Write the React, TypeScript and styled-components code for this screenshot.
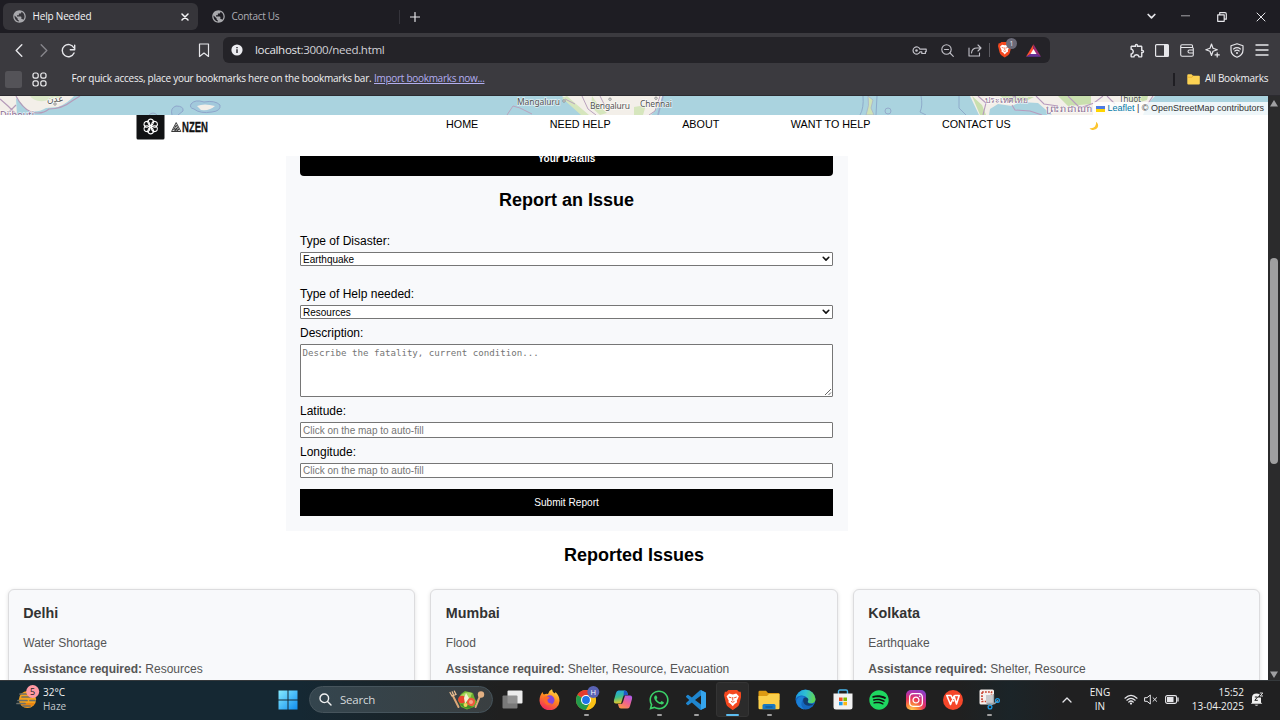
import React from 'react';
import styled, { createGlobalStyle, css } from 'styled-components';
import { MdPublic, MdOutlineExtension } from 'react-icons/md';
import { FaSpotify, FaWhatsapp, FaInstagram } from 'react-icons/fa';

const ui = `"Open Sans", "Noto Sans", sans-serif`;
const page = `"Liberation Sans", Arial, sans-serif`;

const Global = createGlobalStyle`
  * { box-sizing: border-box; }
  body { margin: 0; background: #fff; overflow: hidden; }
  svg { display: block; flex: none; }
`;

const Screen = styled.div`
  width: 1280px;
  height: 720px;
  display: flex;
  flex-direction: column;
  overflow: hidden;
`;

/* ---------- browser chrome ---------- */
const TabStrip = styled.div`
  height: 33px;
  display: flex;
  align-items: center;
  padding: 0 0 0 3px;
  background: #1e1d23;
`;
const Tab = styled.div<{ $active?: boolean }>`
  width: ${p => (p.$active ? 195 : 192)}px;
  height: 27px;
  margin-right: ${p => (p.$active ? 4 : 5)}px;
  padding: 0 9px;
  display: flex;
  align-items: center;
  border-radius: 6px;
  background: ${p => (p.$active ? '#36353a' : 'transparent')};
  color: ${p => (p.$active ? '#f4f4f6' : '#aeadb4')};
`;
const Label = styled.span<{ $size?: number; $ls?: number }>`
  font-family: ${ui};
  font-size: ${p => p.$size ?? 10}px;
  letter-spacing: ${p => p.$ls ?? 0}px;
  line-height: 13.5px;
  white-space: nowrap;
`;
const TabTitle = styled(Label)`
  flex: 1;
  margin-left: 5.5px;
`;
const StripDivider = styled.div`
  width: 1px;
  height: 14px;
  background: #35343b;
  margin-right: 2px;
`;
const Spacer = styled.div`
  flex: 1;
`;
const Slot = styled.div<{ $w: number; $color?: string }>`
  width: ${p => p.$w}px;
  flex: none;
  display: flex;
  align-items: center;
  justify-content: center;
  position: relative;
  color: ${p => p.$color ?? '#e6e6ea'};
`;
const Toolbar = styled.div`
  height: 34px;
  display: flex;
  align-items: center;
  padding-left: 6px;
  background: #3b3a3f;
`;
const BookmarkSlot = styled(Slot)`
  margin-left: 110px;
`;
const Address = styled.div`
  width: 827px;
  height: 26px;
  margin: 0 74.5px 0 7px;
  display: flex;
  align-items: center;
  padding: 0 3px;
  border-radius: 6px;
  background: #242328;
  color: #e3e3e7;
`;
const Url = styled(Label)`
  margin-left: 7px;
  line-height: 18px;
`;
const Dim = styled.span`
  color: #d0cfd5;
`;
const AddressDivider = styled.div`
  width: 1px;
  height: 14px;
  background: #5c5b61;
`;
const ShieldBadge = styled.div`
  position: absolute;
  left: 16px;
  top: -4px;
  width: 11px;
  height: 11px;
  border-radius: 50%;
  background: #6b6a78;
  color: #e8e8f2;
  font: 7px/11px ${ui};
  text-align: center;
`;
const Bookmarks = styled.div`
  height: 29px;
  padding: 0 12px 4px 5px;
  display: flex;
  align-items: center;
  background: #3b3a3f;
  color: #f1f1f3;
  border-bottom: 1px solid #2c2b30;
`;
const GreySquare = styled.div`
  width: 17px;
  height: 17px;
  border-radius: 2.5px;
  background: #545358;
  margin-right: 10px;
`;
const Hint = styled(Label)`
  margin-left: 24.5px;
  width: 302.5px;
`;
const ImportLink = styled(Label)`
  color: #b3aef0;
  text-decoration: underline;
`;
const BarDivider = styled.div`
  width: 2px;
  height: 13px;
  background: #1f1e23;
  margin-right: 12px;
`;
const AllBookmarks = styled(Label)`
  margin-left: 5px;
  width: 63px;
`;

/* ---------- web page ---------- */
const Viewport = styled.div`
  height: 584px;
  display: flex;
  background: #fff;
`;
const Page = styled.main`
  width: 1268px;
  height: 584px;
  overflow: hidden;
  font-family: ${page};
  color: #000;
`;
const MapStrip = styled.div`
  position: relative;
  height: 19px;
  overflow: hidden;
`;
const Attribution = styled.div`
  position: absolute;
  right: 0;
  bottom: 0;
  height: 13px;
  padding: 0 4px 0 3px;
  display: flex;
  align-items: center;
  gap: 2.5px;
  background: rgba(255, 255, 255, 0.8);
  color: #333;
  font-size: 9px;
  line-height: 13px;
  white-space: nowrap;
`;
const LeafletLink = styled.span`
  color: #0078a8;
`;
const Nav = styled.nav`
  height: 41px;
  padding-left: 136px;
  display: flex;
  align-items: flex-start;
  background: #fff;
`;
const NavLinks = styled.div`
  margin: 3px 0 0 236px;
  display: flex;
  gap: 71.5px;
  font-size: 10.75px;
  line-height: 13px;
  white-space: nowrap;
`;
const Moon = styled.div`
  margin: 6px 0 0 77px;
`;
const Body = styled.div`
  height: 524px;
  overflow: hidden;
`;
const Form = styled.form`
  width: 562px;
  height: 375px;
  margin-left: 285.5px;
  padding: 0 14.5px;
  display: flex;
  flex-direction: column;
  background: #f8f9fb;
`;
const DetailsButton = styled.div`
  flex: none;
  height: 35px;
  margin: -15px 0 13px;
  border-radius: 4px;
  background: #000;
  color: #fff;
  font-size: 10px;
  font-weight: bold;
  line-height: 35px;
  text-align: center;
`;
const Heading = styled.h2`
  margin: 0;
  font-size: 18px;
  line-height: 23px;
  text-align: center;
`;
const FieldLabel = styled.label<{ $top: number }>`
  margin-top: ${p => p.$top}px;
  font-size: 12px;
  line-height: 14px;
`;
const field = css`
  width: 533px;
  display: block;
  flex: none;
  margin: 4px 0 0;
  border: 1px solid #767676;
  border-radius: 1px;
  background: #fff;
  color: #000;
  font: 10px/12px ${page};
  outline: none;
`;
const SelectWrap = styled.div`
  position: relative;
`;
const Select = styled.select`
  ${field}
  height: 14px;
  padding: 1px 2px 0;
  line-height: 11px;
  appearance: none;
`;
const Arrow = styled.div`
  position: absolute;
  right: 3px;
  bottom: 4px;
`;
const Area = styled.textarea`
  ${field}
  height: 53px;
  padding: 2px 1.5px;
  font: 9.13px/12px "DejaVu Sans Mono", monospace;
  resize: none;
  &::placeholder { color: #757575; }
`;
const AreaWrap = styled.div`
  position: relative;
`;
const Grip = styled.div`
  position: absolute;
  right: 1px;
  bottom: 1px;
`;
const Input = styled.input<{ $h: number }>`
  ${field}
  height: ${p => p.$h}px;
  padding: 0 2px;
  &::placeholder { color: #757575; }
`;
const Submit = styled.button`
  width: 533px;
  height: 27px;
  margin-top: 11.5px;
  padding: 1px 0 0;
  flex: none;
  border: 0;
  background: #000;
  color: #fff;
  font: 10.15px/26px ${page};
`;
const IssuesHeading = styled(Heading)`
  margin: 13px 0 22px;
`;
const Cards = styled.div`
  display: grid;
  grid-template-columns: repeat(3, 407.5px);
  column-gap: 15px;
  padding-left: 7.5px;
`;
const Card = styled.article`
  height: 130px;
  padding: 0 14.8px;
  border: 1px solid #dcdcde;
  border-radius: 6px;
  background: #f8f9fb;
  box-shadow: 0 1px 4px rgba(0, 0, 0, 0.12);
  color: #555;
  font-size: 12px;
  line-height: 14px;
`;
const City = styled.h3`
  margin: 15px 0 14px;
  color: #333;
  font-size: 14.3px;
  line-height: 17px;
`;
const Line = styled.p`
  margin: 0 0 12px;
`;
const Scrollbar = styled.div`
  width: 12px;
  height: 584px;
  display: flex;
  flex-direction: column;
  align-items: center;
  background: #2b2b2c;
`;
const Thumb = styled.div`
  width: 8px;
  height: 206px;
  margin: 149.5px 0 206px;
  border-radius: 4px;
  background: #9f9fa0;
`;

/* ---------- taskbar ---------- */
const Taskbar = styled.div`
  height: 40px;
  padding-bottom: 1.5px;
  display: flex;
  align-items: center;
  background: linear-gradient(90deg, #152833 0, #152833 300px, #1b2327 420px, #202020 500px, #202020 960px, #1b2428 1010px, #202021 1060px);
  border-top: 1px solid #35393c;
  color: #f2f2f2;
`;
const Weather = styled.div`
  width: 276.5px;
  padding-left: 16px;
  display: flex;
  align-items: center;
`;
const WeatherIcon = styled.div`
  margin-top: -4px;
`;
const Stack = styled.div<{ $align?: string }>`
  display: flex;
  flex-direction: column;
  align-items: ${p => p.$align ?? 'flex-start'};
`;
const WeatherText = styled(Stack)`
  margin-left: 3px;
`;
const HazeText = styled(Label)`
  color: #c3c9cc;
`;
const Search = styled.div`
  width: 184px;
  height: 27px;
  margin: 0 1.5px 0 9.5px;
  padding: 0 7px 0 9px;
  display: flex;
  align-items: center;
  border-radius: 14px;
  border: 1px solid #46545c;
  background: linear-gradient(90deg, #34454e, #3a3f41);
`;
const SearchText = styled(Label)`
  flex: 1;
  margin-left: 8px;
  color: #d5d9db;
`;
const AppSlot = styled.div`
  width: 36.65px;
  height: 38px;
  flex: none;
  position: relative;
  display: flex;
  align-items: center;
  justify-content: center;
`;
const Tile = styled.div<{ $active?: boolean }>`
  width: 33px;
  height: 35px;
  display: flex;
  align-items: center;
  justify-content: center;
  border-radius: 3px;
  border: 1px solid ${p => (p.$active ? '#343434' : 'transparent')};
  background: ${p => (p.$active ? '#2b2b2b' : 'transparent')};
`;
const Mark = styled.div<{ $active?: boolean }>`
  position: absolute;
  bottom: 2.5px;
  width: ${p => (p.$active ? 13 : 5)}px;
  height: 2.5px;
  border-radius: 2px;
  background: ${p => (p.$active ? '#5dbdf0' : '#a0a0a0')};
`;
const Language = styled(Stack)`
  width: 40px;
`;
const Clock = styled(Stack)`
  width: 61px;
`;
const Bell = styled(Slot)`
  padding-right: 10px;
`;

const stroke = (w = 1.3) => ({ fill: 'none', stroke: 'currentColor', strokeWidth: w, strokeLinecap: 'round' as const, strokeLinejoin: 'round' as const });

const Globe = () => <MdPublic size={15} color="#a9a9ad" />;

const MapArt = () => (
  <svg width="1268" height="19" viewBox="0 0 1268 19">
    <rect width="1268" height="19" fill="#aad3df" />
    <path d="M0 0H74Q68 7 58 11L46 12Q38 17 28 15L21 7L16 2L17 19H0Z" fill="#f3efe9" />
    <path d="M30 0Q34 6 44 5L62 1V0Z" fill="#dbe8c8" />
    <path d="M16 0Q22 12 31 16Q42 19 49 13Q62 13 72 5L80 0M0 3L8 10L17 19M6 19L16 9" fill="none" stroke="#b59bb9" strokeWidth="1.2" />
    <path d="M191 8Q195 3 204 6Q215 4 220 9Q221 15 212 16Q200 18 194 13Q189 12 191 8ZM172 19Q170 12 176 10Q184 10 183 15L178 19" fill="#a2c9dc" stroke="#8fa6cb" strokeWidth="1" />
    <path d="M197 10Q204 7 215 10Q210 15 201 14Z" fill="#f3efe9" />
    <path d="M149 19Q153 15 157 19" fill="none" stroke="#98abc9" />
    <path d="M562 0H663L659 10L651 19H585L573 9Z" fill="#f3efe9" />
    <path d="M567 0L576 8L589 19H581L562 2ZM592 0L599 10L607 17L600 19L591 11ZM634 11L646 9L643 19H634Z" fill="#d6e6bd" />
    <path d="M507 19L513 10L520 12L532 18M565 3L575 8M582 0L588 13L596 19M600 0L605 10L622 12M660 0L655 15L649 19" fill="none" stroke="#b9a2bd" strokeWidth="1" />
    <path d="M663 0L658 19" stroke="#9eaed0" strokeWidth="1.6" />
    <path d="M868 0L873 4L871 12L874 19H866Q870 9 868 0Z" fill="#cfe2b5" stroke="#a9b4c8" strokeWidth=".8" />
    <path d="M863 0Q864 12 860 19M877 0L876 19" fill="none" stroke="#8eabca" />
    <circle cx="888" cy="15" r="3" fill="none" stroke="#94aacb" />
    <path d="M921 0Q923 10 920 16L926 19M959 0V12L966 19" fill="none" stroke="#8eabca" />
    <path d="M970 0H1155L1148 7L1143 19H1052L1038 7L1020 6L1012 10L998 8L990 13L989 19H979Z" fill="#f3efe9" />
    <path d="M972 0L982 9L986 19H980ZM1000 0L1008 6L1026 5L1034 1ZM1058 0L1068 10L1091 8V0ZM1122 0L1133 8L1147 4L1148 0Z" fill="#c9dfae" />
    <path d="M978 0L986 7L983 19M1012 9L1015 14L1030 15L1042 19M1036 0L1044 8L1058 10M1068 0L1080 12L1094 7L1103 0M1107 0L1115 8M1153 0L1147 9" fill="none" stroke="#b79bbd" strokeWidth="1.1" />
    <g fontFamily='"Noto Sans", "Open Sans", "DejaVu Sans", sans-serif' fontSize="8.5" fill="#555" stroke="#fff" strokeWidth="1.4" strokeOpacity=".65" paintOrder="stroke">
      <text x="517" y="9" textLength="43">Mangaluru</text>
      <text x="590" y="13" textLength="40">Bengaluru</text>
      <text x="640" y="11.3" textLength="32">Chennai</text>
      <text x="0" y="21.5" fontSize="9" fill="#8a6d93" textLength="34">Djibouti</text>
      <text x="47" y="6" fontSize="9">عدن</text>
      <text x="985" y="6.5" fill="#8a6d93" textLength="43">ประเทศไทย</text>
      <text x="1046" y="16" fill="#8a6d93" textLength="46" lengthAdjust="spacingAndGlyphs">ព្រះរាជាណា</text>
      <text x="1119" y="6" textLength="22">Thuột</text>
    </g>
    <g fill="#fff" stroke="#777" strokeWidth=".8">
      <circle cx="564" cy="5" r="1.2" /><circle cx="610" cy="3.2" r="1.2" /><circle cx="656" cy="2.2" r="1.2" /><circle cx="55" cy="8" r="1.2" />
    </g>
  </svg>
);

const Logo = () => (
  <svg width="74" height="25" viewBox="0 0 74 25">
    <path d="M.5 0H28.5V23A1.5 1.5 0 0 1 27 24.5H2A1.5 1.5 0 0 1 .5 23Z" fill="#111214" />
    <g fill="none" stroke="#fff" strokeWidth="1.1">
      {[0, 60, 120, 180, 240, 300].map(a => (
        <path key={a} d="M14.7 10.4Q12.200 9.800 11.600 6.900Q12.600 4.100 14.700 4.100Q16.800 4.100 17.800 6.900Q17.200 9.800 14.700 10.400" transform={`rotate(${a} 14.7 11.5)`} />
      ))}
      <circle cx="14.7" cy="11.5" r=".9" />
    </g>
    <path d="M35.6 16.5L40.2 7.6L44.8 16.5ZM37.6 15L40.2 10.2L42.7 15ZM39 16L40.2 12.8L41.5 16" fill="none" stroke="#222" strokeWidth=".9" />
    <text x="46" y="17" fontFamily={page} fontWeight="bold" fontSize="14.2" textLength="26" lengthAdjust="spacingAndGlyphs" fill="#111" stroke="#111" strokeWidth=".3">NZEN</text>
  </svg>
);

const Chevron = () => (
  <svg width="8" height="6" viewBox="0 0 8 6"><path d="M1.2 1.3L4 4.1L6.8 1.3" {...stroke(1.6)} stroke="#111" /></svg>
);

const Puzzle = () => <MdOutlineExtension size={17} />;

const Lion = ({ size }: { size: number }) => (
  <svg width={size} height={size * 1.15} viewBox="0 0 20 23">
    <path d="M5 0H15L17 2L19 2L20 6L17.5 16Q17 18 15 19.5L10 23L5 19.5Q3 18 2.5 16L0 6L1 2L3 2Z" fill="#f5481f" />
    <path d="M6 4L10 5L14 4L17 7L14.6 12.2L15 14L12.2 16L10 18.6L7.8 16L5 14L5.4 12.2L3 7Z" fill="#fff" />
    <path d="M5.5 8L8.5 9M14.5 8L11.5 9M10 8V12M8 13L10 14L12 13" stroke="#f5481f" strokeWidth="1.1" fill="none" />
  </svg>
);

const Haze = () => (
  <svg width="24" height="25" viewBox="0 0 24 25">
    <circle cx="11.5" cy="14.500" r="8.6" fill="#f5a21d" />
    <path d="M4 18A8.6 8.6 0 0 0 19 18Z" fill="#e88512" />
    <g stroke="#6d6f6a" strokeWidth="1.7" strokeLinecap="round">
      <path d="M4 9H13M6 12H17M2 15.5H11M14 15.5H19M1 18.5H9M7 21H14" />
    </g>
    <circle cx="16.7" cy="6.5" r="6.5" fill="#ff99a4" />
    <text x="16.7" y="10" textAnchor="middle" fontSize="9" fontFamily={ui} fill="#222">5</text>
  </svg>
);

const Windows = () => (
  <svg width="20" height="20" viewBox="0 0 20 20">
    <defs><linearGradient id="win" x1="0" y1="0" x2="1" y2="1"><stop stopColor="#86ebff" /><stop offset="1" stopColor="#0f8cf0" /></linearGradient></defs>
    <path d="M.5.5H9.5V9.5H.5ZM10.5.5H19.5V9.5H10.5ZM.5 10.5H9.5V19.5H.5ZM10.5 10.5H19.5V19.5H10.5Z" fill="url(#win)" />
  </svg>
);

const Salad = () => (
  <svg width="36" height="20" viewBox="0 0 36 20">
    <g strokeLinecap="round" fill="none">
      <path d="M4 6L9.5 17" stroke="#dca878" strokeWidth="2" />
      <path d="M1 2.5L3 6L7 4.5L5.4 1.2M3.2 1.8L4.5 5" stroke="#e9bd92" strokeWidth="1.3" />
      <path d="M31 6L26.5 17" stroke="#dca878" strokeWidth="2" />
    </g>
    <circle cx="32" cy="4.5" r="3.2" fill="#e3b083" />
    <path d="M9 10L12 4L16 1L20 2L24 3L26 9L28 12L25 17L18 19.500L12 17Z" fill="#6bb02f" />
    <path d="M10 8Q15 0 23 3L21 9L12 12Z" fill="#a7d65c" />
    <circle cx="13" cy="9.500" r="3.8" fill="#e8432e" /><circle cx="22" cy="12" r="4.2" fill="#ef5a3c" />
    <circle cx="22" cy="12" r="2" fill="#f7a58a" /><path d="M17 3L20 8L16 14L15 8Z" fill="#f6efd2" />
    <path d="M11 14Q17 21 24 17L19 15Z" fill="#3f8f25" /><circle cx="16.5" cy="15" r="2" fill="#f4d35a" />
  </svg>
);

const TaskView = () => (
  <svg width="21" height="19" viewBox="0 0 21 19">
    <rect x="5.5" y=".5" width="15" height="13" rx="1" fill="#ececec" />
    <rect x=".5" y="5.5" width="15" height="13" rx="1" fill="#858585" fillOpacity=".88" />
  </svg>
);

const Firefox = () => (
  <svg width="21" height="21" viewBox="0 0 21 21">
    <defs><linearGradient id="fx" x1=".8" y1="0" x2=".3" y2="1"><stop stopColor="#ffe14a" /><stop offset=".45" stopColor="#ff8a1e" /><stop offset="1" stopColor="#f0265f" /></linearGradient></defs>
    <path d="M3.6 3Q4 5 5 5.5Q7 4.5 9 5Q10 1.5 13 .3Q13 3 16 4.5L16.5 3Q20.7 7 20.5 12A10 9.5 0 0 1 .5 11.5Q.6 6 3.6 3Z" fill="url(#fx)" />
    <circle cx="10.8" cy="11" r="4.7" fill="#8246dc" />
    <path d="M5 8Q8 6 11 9Q8 9.5 8.5 12Q9.5 15 13 14.5Q11 17 7.5 15.5Q4 13 5 8Z" fill="#ff6a2b" />
  </svg>
);

const Chrome = () => (
  <svg width="28" height="29" viewBox="-2 0 28 29">
    <circle cx="12" cy="15" r="10" fill="#fbc116" />
    <path d="M12 15L3.34 10A10 10 0 0 1 20.66 10Z" fill="#e33b2e" />
    <path d="M12 15L3.34 10A10 10 0 0 0 12 25L16 18Z" fill="#229a4c" />
    <path d="M12 10H20.660A10 10 0 0 1 12 25L16.5 17Z" fill="#fbc116" />
    <circle cx="12" cy="15" r="5" fill="#fff" /><circle cx="12" cy="15" r="3.9" fill="#1d74e8" />
    <circle cx="19.3" cy="7" r="6" fill="#5a63b5" />
    <text x="19.3" y="9.700" textAnchor="middle" fontFamily={ui} fontSize="7.5" fill="#fff">H</text>
  </svg>
);

const Copilot = () => (
  <svg width="20" height="19" viewBox="0 0 20 19">
    <defs>
      <linearGradient id="cpa" x1="0" y1="0" x2=".2" y2="1"><stop stopColor="#1fa0ea" /><stop offset=".55" stopColor="#3ec08b" /><stop offset="1" stopColor="#e6c72b" /></linearGradient>
      <linearGradient id="cpb" x1=".8" y1="0" x2=".2" y2="1"><stop stopColor="#b05be8" /><stop offset=".5" stopColor="#f0638c" /><stop offset="1" stopColor="#fb9747" /></linearGradient>
    </defs>
    <path d="M5.5 .5H12Q14 .5 14.5 3L15 5H12Q10.5 5 10 7L8 13.5H3Q.3 13.5 1 10L3 3Q3.6 .5 5.5 .5Z" fill="url(#cpa)" />
    <path d="M14.5 18.5H8Q6 18.5 5.5 16L5 14H8Q9.5 14 10 12L12 5.5H17Q19.7 5.5 19 9L17 16Q16.4 18.5 14.5 18.5Z" fill="url(#cpb)" />
    <path d="M11 .5Q14 .5 14.5 3L15 5H12Q11 5 10.5 6.5Z" fill="#1d58c9" />
  </svg>
);

const VsCode = () => (
  <svg width="20" height="20" viewBox="0 0 24 24">
    <path d="M23.15 2.587L18.21 .21a1.494 1.494 0 0 0-1.705 .29l-9.46 8.63-4.12-3.128a.999 .999 0 0 0-1.276 .057L.327 7.261A1 1 0 0 0 .326 8.74L3.899 12 .326 15.26a1 1 0 0 0 .001 1.479L1.65 17.94a.999 .999 0 0 0 1.276 .057l4.12-3.128 9.46 8.63a1.492 1.492 0 0 0 1.704 .29l4.942-2.377A1.5 1.5 0 0 0 24 20.06V3.939a1.5 1.5 0 0 0-.85-1.352zm-5.146 14.861L10.826 12l7.178-5.448v10.896z" fill="#1f86cf" />
    <path d="M18 .2L23.15 2.587Q24 3 24 3.939V20.06Q24 21 23.15 21.4L18 23.8Z" fill="#35a5ee" />
  </svg>
);

const Explorer = () => (
  <svg width="22" height="20" viewBox="0 0 22 20">
    <path d="M.5 2Q.5 .8 1.7 .8H8L10 3H20.5Q21.5 3 21.5 4V10H.5Z" fill="#dd9a12" />
    <path d="M.5 6H9L11 4H21.5V18Q21.5 19.2 20.3 19.2H1.7Q.5 19.2 .5 18Z" fill="#fcd04b" />
    <path d="M4.5 19.2V15.5Q4.5 14 6 14H16Q17.5 14 17.5 15.5V19.2Z" fill="#1878c2" />
    <path d="M7.5 17H14.5" stroke="#0d5592" strokeWidth="1.2" />
  </svg>
);

const Edge = () => (
  <svg width="21" height="21" viewBox="0 0 21 21">
    <defs>
      <linearGradient id="eg" x1="0" y1=".3" x2="1" y2=".4"><stop stopColor="#1c9be0" /><stop offset=".5" stopColor="#2fc0d3" /><stop offset="1" stopColor="#63d84a" /></linearGradient>
    </defs>
    <circle cx="10.5" cy="10.5" r="10" fill="#1467be" />
    <path d="M.6 9.5A10 10 0 0 1 20.5 10Q20.5 14 16 14.3Q12.5 14.2 12.7 12.5Q14 11 12.5 9Q10 6 6 6.5Q2 7 .6 9.5Z" fill="url(#eg)" />
    <path d="M7.5 11Q7.5 8.5 10 8.2Q7 6.5 4 8Q0 11 2.5 16Q4.5 19.5 9 20.4Q4.5 16 7.5 11Z" fill="#1b7fd6" />
    <path d="M9.9 8.4Q13.5 8.8 13.3 11Q12.3 12.5 12.8 13.5Q14 15.6 18.7 14.7Q17 17 13.5 16.8Q8 16 8.1 11Q8.3 9 9.9 8.4Z" fill="#123d70" />
  </svg>
);

const Store = () => (
  <svg width="20" height="21" viewBox="0 0 20 21">
    <path d="M5.5 5V2.5Q5.5 1 7 1H13Q14.5 1 14.5 2.5V5" fill="none" stroke="#45b4ea" strokeWidth="1.4" />
    <path d="M.5 4.5H19.5V18Q19.5 20.5 17 20.5H3Q.5 20.5 .5 18Z" fill="#f2f2f2" />
    <path d="M6 8.5H9.6V12H6Z" fill="#f04e23" /><path d="M10.4 8.5H14V12H10.4Z" fill="#7fba00" />
    <path d="M6 12.8H9.6V16.3H6Z" fill="#1d9de8" /><path d="M10.4 12.8H14V16.3H10.4Z" fill="#fdb813" />
  </svg>
);

const GlyphTile = styled.div<{ $bg: string; $round?: boolean }>`
  width: 20px;
  height: 20px;
  display: flex;
  align-items: center;
  justify-content: center;
  border-radius: ${p => (p.$round ? '50%' : '5px')};
  background: ${p => p.$bg};
`;

const Spotify = () => (
  <GlyphTile $round $bg="radial-gradient(circle, #111 55%, transparent 56%)"><FaSpotify size={20} color="#1ed760" /></GlyphTile>
);
const Instagram = () => (
  <GlyphTile $bg="radial-gradient(circle at 28% 105%, #ffd65c 0, #fb8b3a 25%, #e8335d 50%, #b732a8 72%, #6a4bd8 100%)">
    <FaInstagram size={16} color="#fff" />
  </GlyphTile>
);
const Wps = () => (
  <GlyphTile $round $bg="#f5472a">
    <svg width="14" height="12" viewBox="0 0 14 12"><path d="M.8 1.5H5L7.5 7M.8 1.5L4.5 10.5L8 2L10.5 10L13.2 1.5H9" {...stroke(1.6)} stroke="#fff" /></svg>
  </GlyphTile>
);
const Snip = () => (
  <svg width="21" height="21" viewBox="0 0 21 21">
    <rect x=".5" y=".5" width="14.5" height="15" rx="1.5" fill="#f5f0ee" />
    <rect x="3" y="3" width="9.5" height="9.5" fill="none" stroke="#c94532" strokeWidth="1.7" strokeDasharray="1.800 1.200" />
    <path d="M7 6H14V15H7Z" fill="#c9c9cc" />
    <path d="M14.5 5V14L10.5 17M8 14.5H15.5L19 11.5" fill="none" stroke="#9fa5aa" strokeWidth="1.3" />
    <circle cx="11" cy="18" r="1.9" fill="none" stroke="#1f9be6" strokeWidth="1.3" />
    <circle cx="18.5" cy="11.5" r="1.9" fill="none" stroke="#1f9be6" strokeWidth="1.3" />
  </svg>
);

const apps: { name: string; icon: React.ReactNode; open?: boolean; active?: boolean }[] = [
  { name: 'taskview', icon: <TaskView /> },
  { name: 'firefox', icon: <Firefox /> },
  { name: 'chrome', icon: <Chrome />, open: true },
  { name: 'copilot', icon: <Copilot /> },
  { name: 'whatsapp', icon: <FaWhatsapp size={22} color="#3ad168" />, open: true },
  { name: 'vscode', icon: <VsCode />, open: true },
  { name: 'brave', icon: <Lion size={17.5} />, open: true, active: true },
  { name: 'explorer', icon: <Explorer />, open: true },
  { name: 'edge', icon: <Edge /> },
  { name: 'store', icon: <Store /> },
  { name: 'spotify', icon: <Spotify /> },
  { name: 'instagram', icon: <Instagram /> },
  { name: 'wps', icon: <Wps /> },
  { name: 'snip', icon: <Snip />, open: true },
];

const issues = [
  { city: 'Delhi', kind: 'Water Shortage', help: 'Resources' },
  { city: 'Mumbai', kind: 'Flood', help: 'Shelter, Resource, Evacuation' },
  { city: 'Kolkata', kind: 'Earthquake', help: 'Shelter, Resource' },
];

const BrowserTop = () => (
  <>
    <TabStrip>
      <Tab $active>
        <Globe />
        <TabTitle $ls={-0.18}>Help Needed</TabTitle>
        <svg width="8" height="8" viewBox="0 0 8 8"><path d="M1 1L7 7M7 1L1 7" {...stroke(1.5)} /></svg>
      </Tab>
      <Tab>
        <Globe />
        <TabTitle $ls={-0.28}>Contact Us</TabTitle>
      </Tab>
      <StripDivider />
      <Slot $w={26}><svg width="10" height="10" viewBox="0 0 10 10"><path d="M5 .5V9.5M.5 5H9.5" {...stroke(1.2)} /></svg></Slot>
      <Spacer />
      <Slot $w={34}><svg width="9" height="7" viewBox="0 0 9 7"><path d="M1.2 1.5L4.5 4.8L7.8 1.5" {...stroke(1.7)} /></svg></Slot>
      <Slot $w={34}><svg width="9" height="3" viewBox="0 0 9 3"><path d="M0 .8H9" stroke="#a4a4a8" strokeWidth="1" /></svg></Slot>
      <Slot $w={40}><svg width="10" height="10" viewBox="0 0 10 10"><path d="M.7 2.8H7.2V9.3H.7ZM2.7 2.5V.7H8Q9.3 .7 9.3 2V7.2H7.5" {...stroke(1.2)} /></svg></Slot>
      <Slot $w={38}><svg width="10" height="10" viewBox="0 0 10 10"><path d="M1 1L9 9M9 1L1 9" {...stroke(1)} /></svg></Slot>
    </TabStrip>
    <Toolbar>
      <Slot $w={25}><svg width="8" height="13" viewBox="0 0 8 13"><path d="M6.8 .8L1.2 6.5L6.8 12.2" {...stroke(1.4)} /></svg></Slot>
      <Slot $w={25} $color="#86858b"><svg width="8" height="13" viewBox="0 0 8 13"><path d="M1.2 .8L6.8 6.5L1.2 12.2" {...stroke(1.4)} /></svg></Slot>
      <Slot $w={25}><svg width="15" height="15" viewBox="0 0 15 15"><path d="M12.8 4.8A6.1 6.1 0 1 0 13 10M13.7 2.2V6.8H9.3" {...stroke(1.4)} /></svg></Slot>
      <BookmarkSlot $w={25}><svg width="12" height="15" viewBox="0 0 12 15"><path d="M1.5 1H10.5V13.5L6 10L1.5 13.5Z" {...stroke(1.2)} /></svg></BookmarkSlot>
      <Address>
        <Slot $w={22}>
          <svg width="12" height="12" viewBox="0 0 12 12"><circle cx="6" cy="6" r="5.6" fill="#ececf0" /><path d="M6 5.3V9M6 3V4.3" stroke="#242328" strokeWidth="1.4" /></svg>
        </Slot>
        <Url $size={11.6} $ls={-0.34}>localhost<Dim>:3000/need.html</Dim></Url>
        <Spacer />
        <Slot $w={28} $color="#c2c1c8"><svg width="15" height="9" viewBox="0 0 15 9"><path d="M8 3.2A3.6 3.6 0 1 0 8 5.8H9.8V7.5H13.4V5.6H14.2V3.2Z" {...stroke(1.2)} /><circle cx="4.5" cy="4.5" r="1.3" fill="currentColor" /></svg></Slot>
        <Slot $w={28} $color="#c2c1c8"><svg width="13" height="13" viewBox="0 0 13 13"><circle cx="5.5" cy="5.5" r="4.7" {...stroke(1.1)} /><path d="M9 9L12.3 12.3M3.5 5.5H7.5" {...stroke(1.1)} /></svg></Slot>
        <Slot $w={28} $color="#c2c1c8"><svg width="14" height="13" viewBox="0 0 14 13"><path d="M1 4V12H11.5V9M3.5 9Q4 4 9 4H13M10 1L13 4L10 7" {...stroke(1.1)} /></svg></Slot>
        <AddressDivider />
        <Slot $w={30}><Lion size={13.5} /><ShieldBadge>1</ShieldBadge></Slot>
        <Slot $w={27}>
          <svg width="15" height="13" viewBox="0 0 15 13"><path d="M7.5 .3L0 12.7L7.5 8.5Z" fill="#ff5030" /><path d="M7.5 .3L15 12.7L7.5 8.5Z" fill="#9c2a76" /><path d="M0 12.7H15L7.5 8Z" fill="#67329a" /><path d="M7.5 5L4.5 10H10.5Z" fill="#fff" /></svg>
        </Slot>
      </Address>
      <Slot $w={25}><Puzzle /></Slot>
      <Slot $w={25}><svg width="14" height="13" viewBox="0 0 14 13"><rect x=".6" y=".6" width="12.8" height="11.8" rx="1" {...stroke(1.2)} /><path d="M9 .6H13.4V12.4H9Z" fill="currentColor" /></svg></Slot>
      <Slot $w={25}><svg width="14" height="13" viewBox="0 0 14 13"><path d="M12.5 3.5V1.8Q12.5 .8 11.5 .8H2Q.7 .8 .7 2.2T2 3.5H12.3Q13.3 3.5 13.3 4.5V11Q13.3 12.2 12 12.2H2.2Q.7 12.2 .7 10.8V2.2M13.3 6H9.5Q8 6 8 7.5T9.5 9H13.3" {...stroke(1.1)} /></svg></Slot>
      <Slot $w={25}><svg width="15" height="15" viewBox="0 0 15 15"><path d="M6.5 1L8 5.3L12.3 6.7L8 8.2L6.5 12.5L5 8.2L.8 6.7L5 5.3Z" {...stroke(1.2)} /><path d="M12.2 9.8V14M10.1 11.9H14.3" {...stroke(1.2)} /></svg></Slot>
      <Slot $w={25}><svg width="14" height="15" viewBox="0 0 14 15"><path d="M7 .8L13 2.8V7Q13 12 7 14.2Q1 12 1 7V2.8Z" {...stroke(1.2)} /><path d="M3.6 6Q7 3.4 10.4 6M4.8 8Q7 6.4 9.2 8" {...stroke(1.2)} /><circle cx="7" cy="10" r="1" fill="currentColor" /></svg></Slot>
      <Slot $w={25}><svg width="14" height="12" viewBox="0 0 14 12"><path d="M.5 1H13.5M.5 6H13.5M.5 11H13.5" stroke="currentColor" strokeWidth="1.3" /></svg></Slot>
    </Toolbar>
    <Bookmarks>
      <GreySquare />
      <svg width="15" height="15" viewBox="0 0 15 15">
        {[1, 8.8].flatMap(x => [1, 8.8].map(y => <rect key={`${x}-${y}`} x={x} y={y} width="5.2" height="5.2" rx="1.9" {...stroke(1.2)} />))}
      </svg>
      <Hint $ls={-0.26}>For quick access, place your bookmarks here on the bookmarks bar.</Hint>
      <ImportLink $ls={-0.29}>Import bookmarks now...</ImportLink>
      <Spacer />
      <BarDivider />
      <svg width="13" height="11" viewBox="0 0 13 11"><path d="M.3 1.3Q.3 .3 1.3 .3H4.5L6 1.8H12Q12.8 1.8 12.8 2.6V9.6Q12.8 10.6 11.8 10.6H1.3Q.3 10.6 .3 9.6Z" fill="#fcd253" /><path d="M.3 3.2H5L6 1.8" stroke="#e5a92c" strokeWidth=".8" fill="none" /></svg>
      <AllBookmarks $ls={-0.27}>All Bookmarks</AllBookmarks>
    </Bookmarks>
  </>
);

const SelectField = ({ value }: { value: string }) => (
  <SelectWrap>
    <Select defaultValue={value}><option>{value}</option></Select>
    <Arrow><Chevron /></Arrow>
  </SelectWrap>
);

const WebPage = () => (
  <Viewport>
    <Page>
      <MapStrip>
        <MapArt />
        <Attribution>
          <svg width="9" height="6" viewBox="0 0 9 6"><path d="M0 0H9V3H0Z" fill="#4c7be1" /><path d="M0 3H9V6H0Z" fill="#ffd500" /></svg>
          <LeafletLink>Leaflet</LeafletLink>
          <span>|</span>
          <span>© OpenStreetMap contributors</span>
        </Attribution>
      </MapStrip>
      <Nav>
        <Logo />
        <NavLinks>
          {['HOME', 'NEED HELP', 'ABOUT', 'WANT TO HELP', 'CONTACT US'].map(t => <span key={t}>{t}</span>)}
        </NavLinks>
        <Moon>
          <svg width="12" height="10" viewBox="0 0 12 10"><path d="M8 .8Q11 3 9.8 6.2Q8 9.5 4.2 9Q2 8.5 1.5 7.2Q5 7.8 7 5.6Q8.5 3.5 8 .8Z" fill="#fcc52f" /></svg>
        </Moon>
      </Nav>
      <Body>
        <Form>
          <DetailsButton>Your Details</DetailsButton>
          <Heading>Report an Issue</Heading>
          <FieldLabel $top={22}>Type of Disaster:</FieldLabel>
          <SelectField value="Earthquake" />
          <FieldLabel $top={21}>Type of Help needed:</FieldLabel>
          <SelectField value="Resources" />
          <FieldLabel $top={7}>Description:</FieldLabel>
          <AreaWrap>
            <Area placeholder="Describe the fatality, current condition..." />
            <Grip><svg width="8" height="8" viewBox="0 0 8 8"><path d="M1 7L7 1M4.5 7L7 4.5" stroke="#555" strokeWidth=".9" /></svg></Grip>
          </AreaWrap>
          <FieldLabel $top={7}>Latitude:</FieldLabel>
          <Input $h={16} placeholder="Click on the map to auto-fill" />
          <FieldLabel $top={6.5}>Longitude:</FieldLabel>
          <Input $h={15} placeholder="Click on the map to auto-fill" />
          <Submit type="button">Submit Report</Submit>
        </Form>
        <IssuesHeading>Reported Issues</IssuesHeading>
        <Cards>
          {issues.map(i => (
            <Card key={i.city}>
              <City>{i.city}</City>
              <Line>{i.kind}</Line>
              <Line><b>Assistance required:</b> {i.help}</Line>
            </Card>
          ))}
        </Cards>
      </Body>
    </Page>
    <Scrollbar>
      <svg width="12" height="12" viewBox="0 0 12 12"><path d="M6 4L10 10.5H2Z" fill="#a0a0a2" /></svg>
      <Thumb />
      <svg width="12" height="9" viewBox="0 0 12 9"><path d="M6 8L10 1.5H2Z" fill="#a0a0a2" /></svg>
    </Scrollbar>
  </Viewport>
);

const WindowsBar = () => (
  <Taskbar>
    <Weather>
      <WeatherIcon><Haze /></WeatherIcon>
      <WeatherText>
        <Label>32°C</Label>
        <HazeText>Haze</HazeText>
      </WeatherText>
    </Weather>
    <Slot $w={23}><Windows /></Slot>
    <Search>
      <svg width="13" height="13" viewBox="0 0 13 13"><circle cx="5.3" cy="5.3" r="4.3" {...stroke(1.4)} /><path d="M8.5 8.5L12 12" {...stroke(1.4)} /></svg>
      <SearchText $size={11.5} $ls={-0.2}>Search</SearchText>
      <Salad />
    </Search>
    {apps.map(a => (
      <AppSlot key={a.name}>
        <Tile $active={a.active}>{a.icon}</Tile>
        {a.open && <Mark $active={a.active} />}
      </AppSlot>
    ))}
    <Spacer />
    <Slot $w={26}><svg width="10" height="6" viewBox="0 0 10 6"><path d="M1 5L5 1L9 5" {...stroke(1.3)} /></svg></Slot>
    <Language $align="center">
      <Label>ENG</Label>
      <Label>IN</Label>
    </Language>
    <Slot $w={22}><svg width="14" height="11" viewBox="0 0 14 11"><path d="M1 4.2Q7-1.4 13 4.2M2.9 6.2Q7 2.4 11.1 6.2M4.8 8Q7 6 9.2 8" {...stroke(1.2)} /><circle cx="7" cy="9.6" r="1.1" fill="currentColor" /></svg></Slot>
    <Slot $w={18}><svg width="14" height="11" viewBox="0 0 14 11"><path d="M1 3.7H3L6.3 1V10L3 7.3H1ZM9 3.7L12.6 7.3M12.6 3.7L9 7.3" {...stroke(1)} /></svg></Slot>
    <Slot $w={23}><svg width="14" height="9" viewBox="0 0 14 9"><rect x=".6" y=".6" width="11" height="7.8" rx="1.6" {...stroke(1.1)} /><rect x="2" y="2" width="6.5" height="5" fill="currentColor" /><path d="M13 3V6" {...stroke(1.3)} /></svg></Slot>
    <Clock $align="flex-end">
      <Label>15:52</Label>
      <Label>13-04-2025</Label>
    </Clock>
    <Bell $w={36}>
      <svg width="14" height="15" viewBox="0 0 14 15"><path d="M2 10.5V5.5Q2.2 1.500 6.5 1.500T11 5.5V10.5L12.3 11.7H.8ZM4.600 12.7H8.400Q6.500 15 4.600 12.700Z" fill="#f0f0f0" /><path d="M4.8 5H7.6L4.8 8.3H7.8" stroke="#222" fill="none" strokeWidth="1" /><path d="M9.500 .8H13L10 4.200H13.300" stroke="#202021" fill="none" strokeWidth="2.400" /><path d="M9.800 1H12.800L10.200 4H13" stroke="#f0f0f0" fill="none" strokeWidth=".9" /></svg>
    </Bell>
  </Taskbar>
);

export default function App() {
  return (
    <Screen>
      <Global />
      <BrowserTop />
      <WebPage />
      <WindowsBar />
    </Screen>
  );
}
